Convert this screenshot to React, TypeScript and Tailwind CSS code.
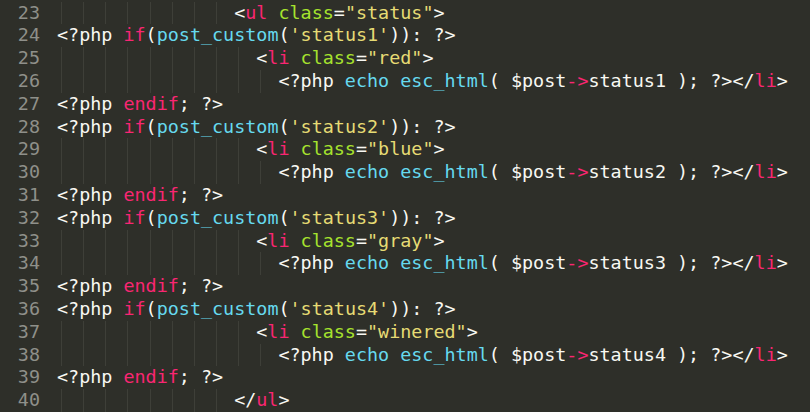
import React from "react";

type Tok = [string, string];

const W = "text-[#f8f8f2]";
const P = "text-[#f92672]";
const G = "text-[#a6e22e]";
const Y = "text-[#e6db74]";
const C = "text-[#66d9ef]";

const liOpen = (cls: string): Tok[] => [
  [W, "<"],
  [P, "li"],
  [W, " "],
  [G, "class"],
  [W, "="],
  [Y, `"${cls}"`],
  [W, ">"],
];

const ifLine = (n: number): Tok[] => [
  [W, "<?php "],
  [P, "if"],
  [W, "("],
  [C, "post_custom"],
  [W, "("],
  [Y, `'status${n}'`],
  [W, ")): ?>"],
];

const echoLine = (n: number): Tok[] => [
  [W, "<?php "],
  [C, "echo"],
  [W, " "],
  [C, "esc_html"],
  [W, "( $post"],
  [P, "->"],
  [W, `status${n} ); ?></`],
  [P, "li"],
  [W, ">"],
];

const endifLine: Tok[] = [
  [W, "<?php "],
  [P, "endif"],
  [W, "; ?>"],
];

const lines: { indent: number; toks: Tok[] }[] = [
  {
    indent: 16,
    toks: [
      [W, "<"],
      [P, "ul"],
      [W, " "],
      [G, "class"],
      [W, "="],
      [Y, '"status"'],
      [W, ">"],
    ],
  },
];

const colors = ["red", "blue", "gray", "winered"];
colors.forEach((c, i) => {
  lines.push({ indent: 0, toks: ifLine(i + 1) });
  lines.push({ indent: 18, toks: liOpen(c) });
  lines.push({ indent: 20, toks: echoLine(i + 1) });
  lines.push({ indent: 0, toks: endifLine });
});
lines.push({
  indent: 16,
  toks: [
    [W, "</"],
    [P, "ul"],
    [W, ">"],
  ],
});

function Line({ num, indent, toks }: { num: number; indent: number; toks: Tok[] }) {
  const guides = Array.from({ length: indent / 2 });
  return (
    <div className="flex h-[22.8px] items-stretch">
      <div className="w-[40px] shrink-0 text-right leading-[22.8px] text-[#8f908a]">{num}</div>
      <div className="ml-[17px] flex items-stretch whitespace-pre leading-[22.8px]">
        {guides.map((_, i) => (
          <span key={i} className="flex w-[2ch] shrink-0">
            <span className="ml-[4px] h-full border-l border-[#3e3f38]" />
          </span>
        ))}
        <span>
          {toks.map(([cls, t], i) => (
            <span key={i} className={cls}>
              {t}
            </span>
          ))}
        </span>
      </div>
    </div>
  );
}

export default function App() {
  return (
    <main
      className="h-[412px] w-[810px] overflow-hidden bg-[#2e2f29] pt-[1.6px] text-[18.4px]"
      style={{ fontFamily: '"DejaVu Sans Mono", "Liberation Mono", monospace' }}
    >
      {lines.map((l, i) => (
        <Line key={i} num={23 + i} indent={l.indent} toks={l.toks} />
      ))}
    </main>
  );
}
